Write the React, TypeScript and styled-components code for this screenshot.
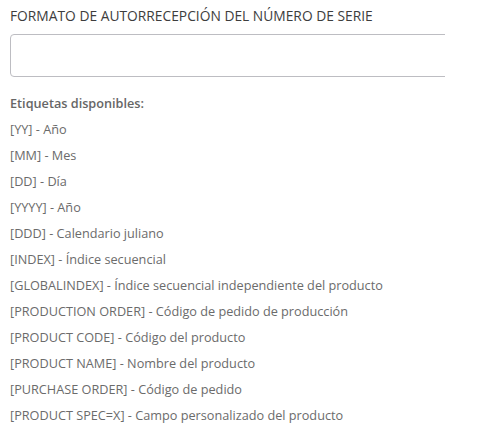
import React from "react";
import styled, { createGlobalStyle } from "styled-components";

const Global = createGlobalStyle`
  html, body { margin: 0; padding: 0; background: #fff; }
  body { font-family: "Open Sans", "Noto Sans", sans-serif; }
`;

const Page = styled.div`
  width: 445px;
  overflow: hidden;
  padding: 6px 0 0 10px;
  box-sizing: border-box;
`;

const Title = styled.div`
  font-size: 13.8px;
  line-height: 20px;
  color: #3d3d3d;
`;

const InputBox = styled.div`
  margin-top: 8px;
  width: 460px;
  height: 43px;
  box-sizing: border-box;
  border: 1px solid #bdbdc2;
  border-radius: 4px;
`;

const Label = styled.div`
  margin-top: 13px;
  font-size: 12.7px;
  font-weight: 600;
  line-height: 26px;
  color: #666;
`;

const List = styled.ul`
  list-style: none;
  margin: 0;
  padding: 0;
`;

const Item = styled.li`
  font-size: 12.7px;
  line-height: 26px;
  color: #6b6b6b;
  white-space: nowrap;
`;

const items = [
  "[YY] - Año",
  "[MM] - Mes",
  "[DD] - Día",
  "[YYYY] - Año",
  "[DDD] - Calendario juliano",
  "[INDEX] - Índice secuencial",
  "[GLOBALINDEX] - Índice secuencial independiente del producto",
  "[PRODUCTION ORDER] - Código de pedido de producción",
  "[PRODUCT CODE] - Código del producto",
  "[PRODUCT NAME] - Nombre del producto",
  "[PURCHASE ORDER] - Código de pedido",
  "[PRODUCT SPEC=X] - Campo personalizado del producto",
];

export default function App() {
  return (
    <>
      <Global />
      <Page>
        <Title>FORMATO DE AUTORRECEPCIÓN DEL NÚMERO DE SERIE</Title>
        <InputBox />
        <Label>Etiquetas disponibles:</Label>
        <List>
          {items.map((t) => (
            <Item key={t}>{t}</Item>
          ))}
        </List>
      </Page>
    </>
  );
}
